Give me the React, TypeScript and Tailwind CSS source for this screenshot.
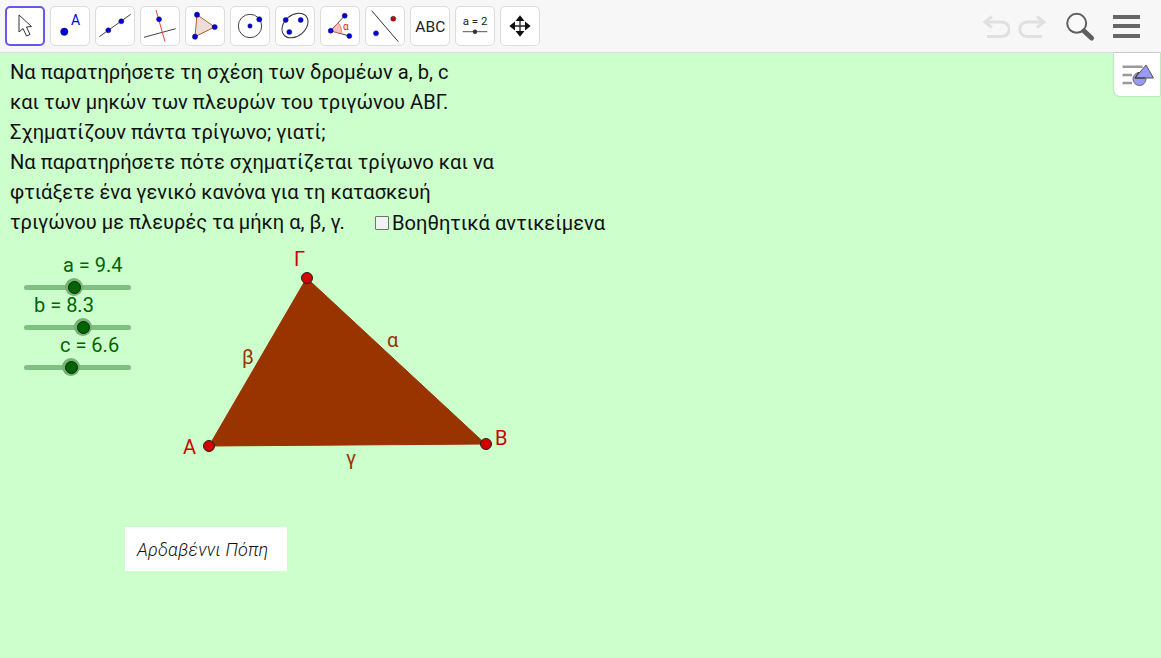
import React from "react";

const Btn = ({ active, children }: { active?: boolean; children: React.ReactNode }) => (
  <div className={active ? "w-10 h-10 rounded-[5px] border-2 border-[#6557f0] bg-white flex items-center justify-center" : "w-10 h-10 rounded-[5px] border border-[#dcdcdc] bg-white flex items-center justify-center"}>
    <svg width="40" height="40" viewBox="0 0 40 40" className="shrink-0">{children}</svg>
  </div>
);

const Dot = ({ x, y, r = 3, c = "#0000e0" }: { x: number; y: number; r?: number; c?: string }) => (
  <circle cx={x} cy={y} r={r} fill={c} stroke="#1a1a50" strokeWidth="0.5" />
);

const lines = [
  "Να παρατηρήσετε τη σχέση των δρομέων a, b, c",
  "και των μηκών των πλευρών του τριγώνου ΑΒΓ.",
  "Σχηματίζουν πάντα τρίγωνο; γιατί;",
  "Να παρατηρήσετε πότε σχηματίζεται τρίγωνο και να",
  "φτιάξετε ένα γενικό κανόνα για τη κατασκευή",
];

const Slider = ({ label, labelX, y, knob }: { label: string; labelX: number; y: number; knob: number }) => (
  <>
    <div className="absolute text-[20px] leading-[24px] text-[#006400] whitespace-nowrap" style={{ left: labelX, top: y - 34 }}>{label}</div>
    <div className="absolute left-[24px] w-[107px] h-[5px] rounded-full bg-[#7fbf7f]" style={{ top: y - 2 }} />
    <div className="absolute w-[18px] h-[18px] rounded-full bg-[#74b374] flex items-center justify-center" style={{ left: knob - 9, top: y - 9 }}>
      <div className="w-[13px] h-[13px] rounded-full bg-[#006400] border border-[#0a2a0a]" />
    </div>
  </>
);

const Point = ({ x, y }: { x: number; y: number }) => (
  <div className="absolute w-[12px] h-[12px] rounded-full bg-[#d40000] border border-[#222]" style={{ left: x - 6, top: y - 6 }} />
);

const CanvasLabel = ({ x, y, text, color }: { x: number; y: number; text: string; color: string }) => (
  <div className="absolute text-[20px] leading-[24px] whitespace-nowrap" style={{ left: x, top: y, color }}>{text}</div>
);

export default function App() {
  return (
    <div className="w-[1161px] h-[658px] bg-white flex flex-col overflow-hidden font-['Roboto',sans-serif]">
      <div className="h-[53px] shrink-0 bg-[#f7f7f7] border-b border-[#dcdcdc] flex items-center pl-[5px] pr-[21px]">
        <div className="flex gap-[5px] -mt-[1px]">
          <Btn active>
            <path d="M14 9 L14 26 L18 22.5 L21.5 30 L25 28.5 L21.5 21 L26.5 20.5 Z" fill="#fff" stroke="#333" strokeWidth="1" />
          </Btn>
          <Btn>
            <Dot x={14.3} y={25.7} r={3.7} />
            <text x="21" y="19" fontSize="14" fill="#0000e0" fontFamily="Roboto">A</text>
          </Btn>
          <Btn>
            <path d="M4.3 30.7 L35.7 8.3" stroke="#444" strokeWidth="1" />
            <Dot x={13.3} y={24.3} r={2.5} />
            <Dot x={26.3} y={15.3} r={2.5} />
          </Btn>
          <Btn>
            <path d="M4 31.3 L35.7 22.7" stroke="#444" strokeWidth="1" />
            <path d="M16 4 L25 35.7" stroke="#f04040" strokeWidth="1" />
            <Dot x={19} y={13.3} r={2.5} />
          </Btn>
          <Btn>
            <path d="M12 8.7 L10 30.7 L29.7 21 Z" fill="#eddcd8" stroke="#b06030" strokeWidth="1" />
            <Dot x={12} y={8.7} r={2.6} />
            <Dot x={29.7} y={21} r={2.6} />
            <Dot x={10} y={30.7} r={2.6} />
          </Btn>
          <Btn>
            <circle cx="20" cy="20" r="11.7" fill="none" stroke="#444" strokeWidth="1" />
            <Dot x={20} y={20} r={2.2} />
            <Dot x={29.3} y={13.3} r={2.6} />
          </Btn>
          <Btn>
            <ellipse cx="20" cy="19.5" rx="14.5" ry="10.5" transform="rotate(-40 20 19.5)" fill="none" stroke="#333" strokeWidth="1" />
            <Dot x={10.7} y={14} r={2.5} />
            <Dot x={25.7} y={14} r={2.5} />
            <Dot x={14.3} y={26} r={2.5} />
          </Btn>
          <Btn>
            <path d="M10.7 24.7 L24.7 9.7 M10.7 24.7 L29.3 30" stroke="#444" strokeWidth="1" fill="none" />
            <path d="M10.7 24.7 L18 17 A11 11 0 0 1 21 27.6 Z" fill="#f4c4c0" stroke="#e05050" strokeWidth="0.7" />
            <Dot x={10.7} y={24.7} r={2.5} />
            <Dot x={24.7} y={9.7} r={2.5} />
            <Dot x={29.3} y={30} r={2.5} />
            <text x="23" y="23.5" fontSize="10" fill="#e02020" fontFamily="Roboto">α</text>
          </Btn>
          <Btn>
            <path d="M6.7 4.7 L33.3 35.7" stroke="#333" strokeWidth="1" />
            <Dot x={28.3} y={12.7} r={2.5} c="#d00000" />
            <Dot x={11} y={27.3} r={2.5} />
          </Btn>
          <Btn>
            <text x="20.3" y="25.5" textAnchor="middle" fontSize="15.5" fill="#222" fontFamily="Roboto">ABC</text>
          </Btn>
          <Btn>
            <text x="20" y="18.5" textAnchor="middle" fontSize="11.5" fill="#222" fontFamily="Roboto">a = 2</text>
            <path d="M7.7 25.7 L32.3 25.7" stroke="#555" strokeWidth="1" />
            <circle cx="20" cy="25.7" r="2.2" fill="#333" />
          </Btn>
          <Btn>
            <path d="M20 13 L20 27 M13 20 L27 20" stroke="#222" strokeWidth="1.3" />
            <path d="M20 9.3 L15.5 15 L24.5 15 Z M20 30.7 L15.5 25 L24.5 25 Z M9.3 20 L15 15.5 L15 24.5 Z M30.7 20 L25 15.5 L25 24.5 Z" fill="#111" />
          </Btn>
        </div>
        <div className="ml-auto flex items-center">
          <svg width="28" height="24" viewBox="0 0 28 24" fill="none" stroke="#e0e0e0" strokeWidth="3">
            <path d="M3 8 H20 A7 7 0 0 1 20 22.5 H5" />
            <path d="M10 2.5 L3 8 L10 13.5" />
          </svg>
          <svg width="28" height="24" viewBox="0 0 28 24" fill="none" stroke="#e0e0e0" strokeWidth="3" className="ml-[8px]">
            <path d="M26 8 H9 A7 7 0 0 0 9 22.5 H24" />
            <path d="M19 2.5 L26 8 L19 13.5" />
          </svg>
          <svg width="30" height="30" viewBox="0 0 30 30" fill="none" className="ml-[20px]">
            <circle cx="10.7" cy="12.3" r="9.5" stroke="#5f5f5f" strokeWidth="2" fill="#fff" fillOpacity="0.3" />
            <path d="M18 20 L25.5 27" stroke="#5f5f5f" strokeWidth="5" strokeLinecap="round" />
          </svg>
          <div className="ml-[17px] w-[27px] flex flex-col gap-[5.5px]">
            <div className="h-[4px] bg-[#666]" />
            <div className="h-[4px] bg-[#666]" />
            <div className="h-[4px] bg-[#666]" />
          </div>
        </div>
      </div>

      <div className="relative flex-1 bg-[#ccffcc] text-[#111]">
        <div className="absolute top-0 right-[1px] w-[46px] h-[43px] bg-white rounded-bl-[6px] shadow-[0_0_2px_rgba(0,0,0,0.3)] flex items-center justify-center">
          <svg width="34" height="30" viewBox="0 0 34 30">
            <path d="M2.5 6.7 H22.5 M2.5 15 H12 M2.5 23 H12" stroke="#999" strokeWidth="2.5" />
            <circle cx="19.5" cy="19" r="6.5" fill="#9a9af5" stroke="#666" strokeWidth="1" />
            <path d="M26 5 L33.5 18 H15 Z" fill="#9a9af5" stroke="#555" strokeWidth="1" />
            <path d="M15 18 L19 12 M15 18 H25" stroke="#333" strokeWidth="1" />
          </svg>
        </div>

        <div className="absolute left-[10px] top-[4px] text-[20.14px] leading-[30px]">
          {lines.map((l) => (
            <div key={l} className="whitespace-nowrap">{l}</div>
          ))}
          <div className="whitespace-nowrap">τριγώνου με πλευρές τα μήκη α, β, γ.</div>
        </div>

        <div className="absolute left-[375px] top-[163px] w-[14px] h-[14px] rounded-[1px] bg-[#f2f2f2] border border-[#667766]" />
        <div className="absolute left-[392px] top-[155px] text-[20.14px] leading-[30px] whitespace-nowrap">Βοηθητικά αντικείμενα</div>

        <Slider label="a = 9.4" labelX={63} y={234} knob={74} />
        <Slider label="b = 8.3" labelX={34} y={274} knob={83} />
        <Slider label="c = 6.6" labelX={60} y={314} knob={71} />

        <svg className="absolute left-[200px] top-[215px]" width="300" height="190" viewBox="0 0 300 190">
          <path d="M9 178 L106.7 10 L285.5 176 Z" fill="#993300" stroke="#993300" strokeWidth="1" />
        </svg>
        <Point x={209} y={392.7} />
        <Point x={306.7} y={225} />
        <Point x={485.7} y={391} />

        <CanvasLabel x={183} y={382} text="Α" color="#cc0000" />
        <CanvasLabel x={495} y={373} text="Β" color="#cc0000" />
        <CanvasLabel x={294} y={194} text="Γ" color="#cc0000" />
        <CanvasLabel x={387} y={275} text="α" color="#993300" />
        <CanvasLabel x={242} y={292} text="β" color="#993300" />
        <CanvasLabel x={346} y={393} text="γ" color="#993300" />

        <div className="absolute left-[125px] top-[474px] w-[162px] h-[44px] bg-white flex items-center pl-[12px]">
          <span className="font-light italic text-[18px] text-[#111] whitespace-nowrap tracking-[0.2px]">Αρδαβέννι Πόπη</span>
        </div>
      </div>
    </div>
  );
}
